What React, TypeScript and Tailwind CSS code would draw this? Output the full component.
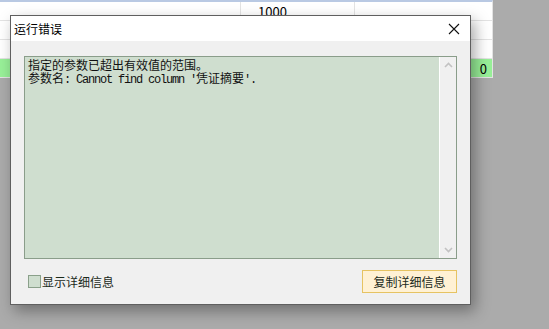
import React from 'react';

const CJK = '"Noto Sans CJK SC", "Noto Sans", sans-serif';
const MONO = '"Liberation Mono", "Noto Sans CJK SC", monospace';

function GridRow({ green, cells }: { green?: boolean; cells: string[] }) {
  return (
    <div className={`flex h-[19px] border-b border-[#e3e3e3] ${green ? 'bg-[#98f098]' : 'bg-white'}`}>
      <div className="w-[241px] border-r border-[#e3e3e3]" />
      <div className="w-[114px] border-r border-[#e3e3e3] pl-[17px] text-[13px] leading-[19px] text-black">
        {cells[0]}
      </div>
      <div className="flex-1 pr-[5px] text-right text-[13px] leading-[19px] text-black">{cells[1]}</div>
    </div>
  );
}

function Mono({ children }: { children: React.ReactNode }) {
  return (
    <span style={{ fontFamily: MONO }} className="tracking-[-1.2px]">
      {children}
    </span>
  );
}

export default function App() {
  return (
    <div
      className="relative w-[549px] h-[329px] overflow-hidden bg-[#ababab]"
      style={{ fontFamily: CJK }}
    >
      {/* grid behind the dialog */}
      <div className="w-[493px] border-t-2 border-[#b9c9e3] border-r border-r-[#e3e3e3]">
        <GridRow cells={['1000', '']} />
        <GridRow cells={['', '']} />
        <GridRow cells={['', '']} />
        <GridRow green cells={['', '0']} />
      </div>

      {/* error dialog */}
      <div className="absolute left-[10px] top-[15px] w-[461px] h-[290px] flex flex-col border border-[#5f5f5f] bg-[#f0f0f0] shadow-[4px_6px_14px_rgba(0,0,0,0.35)]">
        <div className="h-[25px] bg-white flex items-center justify-between pl-[3px] pr-[10px]">
          <span className="text-[12px] text-black leading-none">运行错误</span>
          <svg width="12" height="12" viewBox="0 0 12 12">
            <path d="M1 1 L11 11 M11 1 L1 11" stroke="#111" strokeWidth="1.1" />
          </svg>
        </div>

        <div className="flex-1 flex flex-col pt-[15px] px-[13px] pb-[11px]">
          <div className="h-[203px] flex border border-[#8a9d8a] bg-[#cfdecf]">
            <div className="flex-1 pl-[3px] pt-[1px] text-[12px] leading-[13px] text-[#111]">
              <div className="h-[13px] whitespace-nowrap">指定的参数已超出有效值的范围。</div>
              <div className="h-[13px] whitespace-nowrap">
                参数名<Mono>: Cannot find column '</Mono>凭证摘要<Mono>'.</Mono>
              </div>
            </div>
            <div className="w-[17px] flex flex-col justify-between items-center border-l border-white bg-[#f0f0f0] py-[5px]">
              <svg width="9" height="6" viewBox="0 0 9 6">
                <path d="M1 5 L4.5 1.5 L8 5" stroke="#c2c2c2" strokeWidth="1.6" fill="none" />
              </svg>
              <svg width="9" height="6" viewBox="0 0 9 6">
                <path d="M1 1 L4.5 4.5 L8 1" stroke="#c2c2c2" strokeWidth="1.6" fill="none" />
              </svg>
            </div>
          </div>

          <div className="mt-[11px] h-[23px] flex items-center justify-between">
            <label className="flex items-center gap-[1px] pl-[4px]">
              <span className="w-[13px] h-[13px] border border-[#8aa08a] bg-[#cfdecf]" />
              <span className="text-[12px] text-[#1b2a1b] leading-none">显示详细信息</span>
            </label>
            <button className="w-[95px] h-[23px] border border-[#e6c362] bg-[#fff1d4] text-[12px] text-[#1b2a1b] leading-none">
              复制详细信息
            </button>
          </div>
        </div>
      </div>
    </div>
  );
}
